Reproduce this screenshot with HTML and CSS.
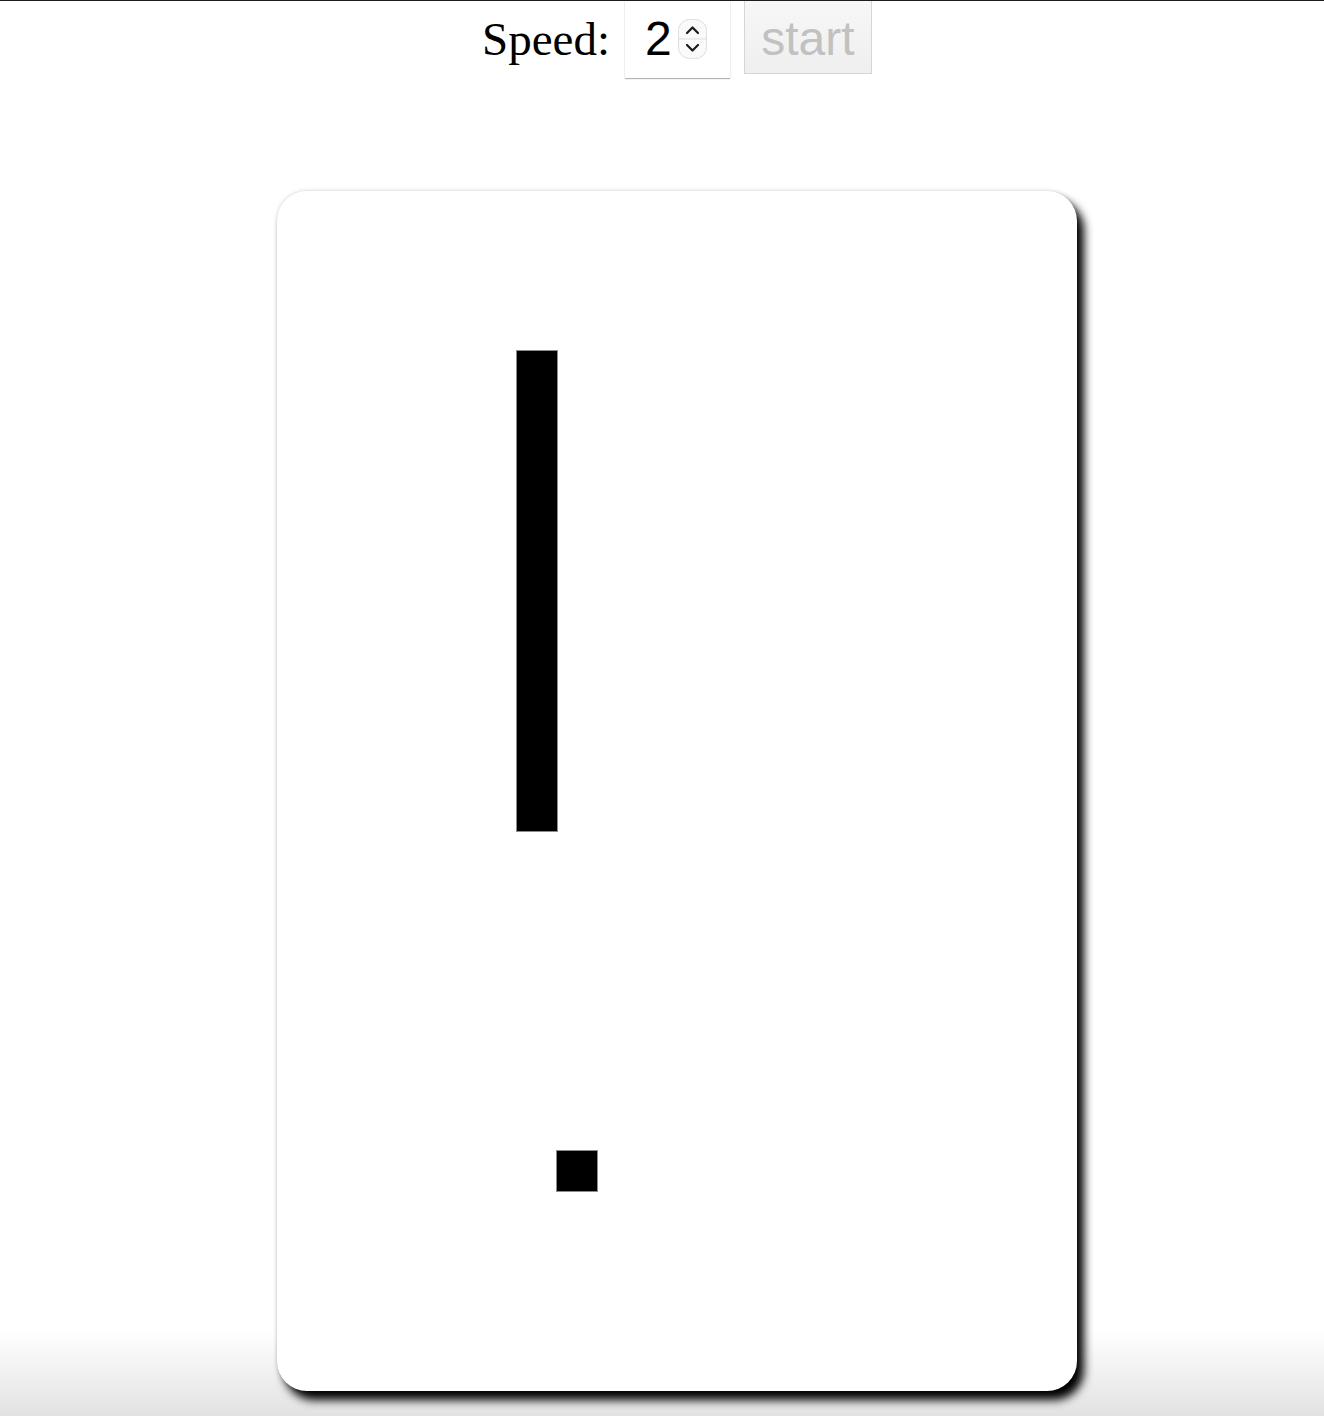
FILE: index.html
```html
<!DOCTYPE html>
<html lang="en">
<head>
<meta charset="utf-8">
<title>Snake</title>
<link rel="stylesheet" href="styles.css">
</head>
<body>
<div class="page">
  <div class="controls">
    <label class="speed-label" for="speed">Speed:</label>
    <div class="speed-input" id="speed">
      <span class="speed-value">2</span>
      <svg class="spinner" width="29" height="40" viewBox="0 0 29 40" aria-hidden="true">
        <rect x="0.5" y="0.5" width="28" height="39" rx="11" ry="11" fill="#fafafa" stroke="#dedede"/>
        <line x1="1" y1="20" x2="28" y2="20" stroke="#dedede"/>
        <path d="M9 14 L14.5 8.5 L20 14" fill="none" stroke="#1a1a1a" stroke-width="2.2" stroke-linecap="round" stroke-linejoin="round"/>
        <path d="M9 26 L14.5 31.5 L20 26" fill="none" stroke="#1a1a1a" stroke-width="2.2" stroke-linecap="round" stroke-linejoin="round"/>
      </svg>
    </div>
    <button class="start-btn" disabled>start</button>
  </div>
  <div class="board">
    <div class="cell snake"></div>
    <div class="cell food"></div>
  </div>
</div>
</body>
</html>
```
FILE: styles.css
```css
html, body {
  margin: 0;
  padding: 0;
  background: #ffffff;
}

body {
  border-top: 1px solid #1c1c1c;
}

.page {
  box-sizing: border-box;
  min-height: 1415px;
  padding-left: 30px;
  background: linear-gradient(to bottom, #ffffff 0, #ffffff 1330px, #e2e2e2 1415px);
  overflow: hidden;
}

.controls {
  display: flex;
  justify-content: center;
  align-items: flex-start;
  height: 78px;
}

.speed-label {
  font-family: "Liberation Serif", "Times New Roman", serif;
  font-size: 47px;
  line-height: 1;
  color: #000;
  margin-top: 15px;
  margin-right: 15px;
}

.speed-input {
  box-sizing: border-box;
  width: 105px;
  height: 77px;
  display: flex;
  align-items: center;
  padding-left: 20px;
  padding-bottom: 1px;
  background: #fff;
  box-shadow: 0 1px 1px rgba(0, 0, 0, 0.28), 0 0 1px rgba(0, 0, 0, 0.12);
}

.speed-value {
  font-family: "Liberation Sans", Arial, sans-serif;
  font-size: 48px;
  line-height: 1;
  color: #000;
}

.spinner {
  display: block;
  margin-left: 6px;
}

.start-btn {
  box-sizing: border-box;
  width: 128px;
  height: 74px;
  margin-left: 14px;
  margin-top: -1px;
  padding: 4px 0 0;
  border: 1px solid #d6d6d6;
  border-radius: 0;
  background: linear-gradient(to bottom, #f7f7f7, #efefef);
  font-family: "Liberation Sans", Arial, sans-serif;
  font-size: 48px;
  line-height: 1;
  color: #c1c1c1;
}

.board {
  box-sizing: border-box;
  width: 800px;
  height: 1200px;
  margin: 112px auto 0;
  background: #ffffff;
  border-radius: 30px;
  box-shadow: 0 0 4px rgba(0, 0, 0, 0.18), 7px 9px 10px #000;
  display: grid;
  grid-template-columns: repeat(20, 40px);
  grid-template-rows: repeat(30, 40px);
}

.cell {
  background: #000;
  box-shadow: 0 0 0 1px rgba(0, 0, 0, 0.45);
}

.snake {
  grid-column: 7;
  grid-row: 5 / span 12;
}

.food {
  grid-column: 8;
  grid-row: 25;
}
```
